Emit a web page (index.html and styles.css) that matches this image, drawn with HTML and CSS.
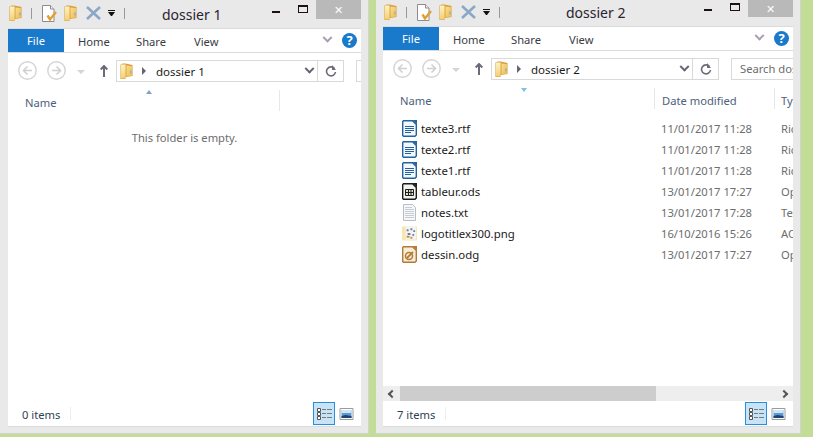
FILE: index.html

```html
<!DOCTYPE html>
<html>
  <head>
    <meta charset="utf-8">
    <title>dossier</title>
    <link rel="stylesheet" href="styles.css">
  </head>
  <body>
    <svg class="defs" width="0" height="0">
      <linearGradient id="fold-l" x1="0" y1="0" x2="0" y2="1">
        <stop offset="0" stop-color="#fdf3c4"/>
        <stop offset="1" stop-color="#f3cf73"/>
      </linearGradient>
      <linearGradient id="fold-r" x1="0" y1="0" x2="1" y2="1">
        <stop offset="0" stop-color="#fbe08e"/>
        <stop offset="1" stop-color="#eeb94f"/>
      </linearGradient>
      <symbol id="folder" viewBox="0 0 14 17">
        <path d="M.5 1.500L3 .5h3l7.500 1.500v12L6 15v2H.5z" fill="#d99f3e"/>
        <path d="M1 1.500h5v14l-.5 1H1z" fill="url(#fold-l)"/>
        <path d="M7 2.500l6 1v10l-6 .5z" fill="url(#fold-r)"/>
        <path d="M11 8h1.500v3H11z" fill="#7fb2d8"/>
      </symbol>
      <symbol id="newdoc" viewBox="0 0 15 17">
        <path d="M.5.500h8l3.500 3.500v12.500H.5z" fill="#fff" stroke="#8d8a94"/>
        <path d="M8.500.5v3.500h3.500" fill="#eee" stroke="#8d8a94"/>
        <path d="M5.500 10.500l2.500 4 6-7.500" fill="none" stroke="#e0a030" stroke-width="2.400"/>
      </symbol>
      <symbol id="cross" viewBox="0 0 15 14">
        <path d="M1 1l13 12M14 1L1 13" fill="none" stroke="#8ba7c7" stroke-width="2.600"/>
      </symbol>
      <symbol id="up" viewBox="0 0 8 12">
        <path d="M4 12V1M.7 4.500L4 1l3.300 3.500" fill="none" stroke="#6f6879" stroke-width="2"/>
      </symbol>
      <symbol id="refresh" viewBox="0 0 12 12">
        <path d="M9.500 3.500A4.500 4.500 0 1 0 10.500 7" fill="none" stroke="#706a78" stroke-width="1.600"/>
        <path d="M7 0v5h4z" fill="#706a78"/>
      </symbol>
      <symbol id="back" viewBox="0 0 19 19">
        <circle cx="9.500" cy="9.500" r="8.700" fill="#fff" stroke="#d4d4d4" stroke-width="1.400"/>
        <path d="M14 9.500H6M9.500 5.500l-4 4 4 4" fill="none" stroke="#d0d0d0" stroke-width="1.600"/>
      </symbol>
      <symbol id="doc" viewBox="0 0 15 17">
        <path d="M1.500.7h9l3.800 3.800v10.500l-1.300 1.300H1.500L.7 15.500V1.500z" fill="#f4f8fc" stroke="#22639f" stroke-width="1.400"/>
        <path d="M10.500 0H15v4.500z" fill="#22639f"/>
        <path d="M3 6.500h9M3 8.500h9M3 10.500h9M3 12.500h6" stroke="#22639f"/>
      </symbol>
      <symbol id="sheet" viewBox="0 0 15 17">
        <path d="M1.500.7h9l3.800 3.800v10.500l-1.300 1.300H1.500L.7 15.500V1.500z" fill="#f1f3ec" stroke="#1c1c1c" stroke-width="1.400"/>
        <path d="M10.500 0H15v4.500z" fill="#1c1c1c"/>
        <path d="M3.500 6.500h8v6h-8zM3.500 9.500h8M6.500 6.500v6M9 6.500v6" fill="#dfe3d4" stroke="#1c1c1c"/>
      </symbol>
      <symbol id="txt" viewBox="0 0 15 17">
        <path d="M1.500.5h9l3 3v13h-12z" fill="#f6f7f9" stroke="#b7bcc6"/>
        <path d="M3 3.500h7M3 5.500h9M3 7.500h9M3 9.500h9M3 11.500h9M3 13.500h9" stroke="#c8ccd4"/>
      </symbol>
      <symbol id="png" viewBox="0 0 16 17">
        <path d="M0 1h16v15H0z" fill="#f6e7b0"/>
        <path d="M4 1h11v14H4z" fill="#f4f4f4"/>
        <path d="M5 4h2v2H5zM9 3h2v2H9zM12 5h2v2h-2zM6 8h3v2H6zM11 9h2v2h-2z" fill="#6e7fa6"/>
        <path d="M5 11h3v2H5zM9 12h2v2H9z" fill="#c58b4c"/>
      </symbol>
      <symbol id="draw" viewBox="0 0 15 17">
        <path d="M1.500.7h9l3.800 3.800v10.500l-1.300 1.300H1.500L.7 15.500V1.500z" fill="#f8ecd9" stroke="#b27a35" stroke-width="1.400"/>
        <path d="M10.500 0H15v4.500z" fill="#b27a35"/>
        <circle cx="7" cy="10" r="3.500" fill="none" stroke="#b27a35" stroke-width="1.500"/>
        <path d="M5 12l6-6" stroke="#b27a35" stroke-width="1.800"/>
      </symbol>
      <symbol id="details" viewBox="0 0 15 12">
        <path d="M.5.500h3v3h-3zM.5 4.500h3v3h-3zM.5 8.500h3v3h-3z" fill="#fff" stroke="#555"/>
        <path d="M5 1.500h4M10 1.500h5M5 5.500h4M10 5.500h5M5 9.500h4M10 9.500h5" stroke="#7a7a7a"/>
      </symbol>
      <symbol id="thumbs" viewBox="0 0 14 12">
        <path d="M.5.500h13v11H.5z" fill="#fff" stroke="#9a9aa4"/>
        <path d="M2 2h10v8H2z" fill="#5b9bd5"/>
        <path d="M2 2h10v3H2z" fill="#cfe6f6"/>
        <path d="M2 8l4-1 6 1v2H2z" fill="#1d4470"/>
      </symbol>
    </svg>

    <div class="window first">
      <div class="titlebar">
        <div class="qat">
          <svg class="ico-folder"><use href="#folder"/></svg>
          <span class="qat-sep"></span>
          <svg class="ico-new"><use href="#newdoc"/></svg>
          <svg class="ico-folder"><use href="#folder"/></svg>
          <svg class="ico-cross"><use href="#cross"/></svg>
          <span class="qat-drop"></span>
          <span class="qat-sep"></span>
        </div>
        <div class="title">dossier 1</div>
        <div class="controls">
          <span class="min"></span>
          <span class="max"></span>
          <span class="close">✕</span>
        </div>
      </div>
      <div class="frame">
        <div class="tabs">
          <div class="tab-file">File</div>
          <div class="tab">Home</div>
          <div class="tab">Share</div>
          <div class="tab">View</div>
          <span class="chevron"></span>
          <span class="help">?</span>
        </div>
        <div class="nav">
          <svg class="ico-back"><use href="#back"/></svg>
          <svg class="ico-back flip"><use href="#back"/></svg>
          <span class="nav-drop"></span>
          <svg class="ico-up"><use href="#up"/></svg>
          <div class="address">
            <svg class="ico-folder"><use href="#folder"/></svg>
            <span class="crumb-arrow"></span>
            <span class="crumb">dossier 1</span>
            <span class="chevron small"></span>
            <span class="refresh"><svg class="ico-refresh"><use href="#refresh"/></svg></span>
          </div>
          <div class="search"></div>
        </div>
        <div class="content">
          <div class="head">
            <div class="col-name">Name<span class="sort up-caret"></span></div>
          </div>
          <div class="empty">This folder is empty.</div>
        </div>
        <div class="status">
          <span class="count">0 items</span>
          <span class="view-btn on"><svg class="ico-view"><use href="#details"/></svg></span>
          <span class="view-btn"><svg class="ico-view"><use href="#thumbs"/></svg></span>
        </div>
      </div>
    </div>

    <div class="window second">
      <div class="titlebar">
        <div class="qat">
          <svg class="ico-folder"><use href="#folder"/></svg>
          <span class="qat-sep"></span>
          <svg class="ico-new"><use href="#newdoc"/></svg>
          <svg class="ico-folder"><use href="#folder"/></svg>
          <svg class="ico-cross"><use href="#cross"/></svg>
          <span class="qat-drop"></span>
          <span class="qat-sep"></span>
        </div>
        <div class="title">dossier 2</div>
        <div class="controls">
          <span class="min"></span>
          <span class="max"></span>
          <span class="close">✕</span>
        </div>
      </div>
      <div class="frame">
        <div class="tabs">
          <div class="tab-file">File</div>
          <div class="tab">Home</div>
          <div class="tab">Share</div>
          <div class="tab">View</div>
          <span class="chevron"></span>
          <span class="help">?</span>
        </div>
        <div class="nav">
          <svg class="ico-back"><use href="#back"/></svg>
          <svg class="ico-back flip"><use href="#back"/></svg>
          <span class="nav-drop"></span>
          <svg class="ico-up"><use href="#up"/></svg>
          <div class="address">
            <svg class="ico-folder"><use href="#folder"/></svg>
            <span class="crumb-arrow"></span>
            <span class="crumb">dossier 2</span>
            <span class="chevron small"></span>
            <span class="refresh"><svg class="ico-refresh"><use href="#refresh"/></svg></span>
          </div>
          <div class="search">Search dossier 2</div>
        </div>
        <div class="content">
          <div class="head">
            <div class="col-name">Name<span class="sort down-caret"></span></div>
            <div class="col-date">Date modified</div>
            <div class="col-type">Type</div>
          </div>
          <div class="list">
            <div class="row"><svg class="ico-file"><use href="#doc"/></svg><span class="fname">texte3.rtf</span><span class="fdate">11/01/2017 11:28</span><span class="ftype">Rich Text</span></div>
            <div class="row"><svg class="ico-file"><use href="#doc"/></svg><span class="fname">texte2.rtf</span><span class="fdate">11/01/2017 11:28</span><span class="ftype">Rich Text</span></div>
            <div class="row"><svg class="ico-file"><use href="#doc"/></svg><span class="fname">texte1.rtf</span><span class="fdate">11/01/2017 11:28</span><span class="ftype">Rich Text</span></div>
            <div class="row"><svg class="ico-file"><use href="#sheet"/></svg><span class="fname">tableur.ods</span><span class="fdate">13/01/2017 17:27</span><span class="ftype">OpenDoc</span></div>
            <div class="row"><svg class="ico-file"><use href="#txt"/></svg><span class="fname">notes.txt</span><span class="fdate">13/01/2017 17:28</span><span class="ftype">Text Doc</span></div>
            <div class="row"><svg class="ico-file"><use href="#png"/></svg><span class="fname">logotitlex300.png</span><span class="fdate">16/10/2016 15:26</span><span class="ftype">ACDSee</span></div>
            <div class="row"><svg class="ico-file"><use href="#draw"/></svg><span class="fname">dessin.odg</span><span class="fdate">13/01/2017 17:27</span><span class="ftype">OpenDoc</span></div>
          </div>
        </div>
        <div class="hscroll">
          <span class="arrow left"></span>
          <span class="thumb"></span>
          <span class="arrow right"></span>
        </div>
        <div class="status">
          <span class="count">7 items</span>
          <span class="view-btn on"><svg class="ico-view"><use href="#details"/></svg></span>
          <span class="view-btn"><svg class="ico-view"><use href="#thumbs"/></svg></span>
        </div>
      </div>
    </div>
  </body>
</html>
```

FILE: styles.css

```css
* {
  margin: 0;
  padding: 0;
  box-sizing: border-box;
}
html, body {
  height: 100%;
}
body {
  display: flex;
  gap: 7px;
  background: #c3dd97;
  font-family: "Noto Sans", sans-serif;
  font-size: 11.2px;
  overflow: hidden;
}
.defs {
  position: absolute;
}

.window {
  height: 434px;
  padding: 0 7px 6px 8px;
  display: flex;
  flex-direction: column;
  background: #e9e9e9;
  border-right: 1px solid #d2d2d2;
  border-bottom: 1px solid #d2d2d2;
}
.first {
  width: 369px;
}
.second {
  width: 425px;
  padding-left: 7px;
}

/* title bar */
.titlebar {
  display: flex;
  flex: none;
  height: 28px;
}
.second .titlebar {
  height: 26px;
}
.qat {
  display: flex;
  align-items: center;
  padding-left: 1px;
  height: 26px;
}
.second .qat {
  height: 24px;
}
.ico-folder {
  width: 13px;
  height: 16px;
  flex: none;
}
.qat-sep {
  width: 1px;
  height: 11px;
  margin: 0 10px 0 9px;
  background: #9a96a0;
}
.ico-new {
  width: 15px;
  height: 17px;
  margin-right: 7px;
}
.ico-cross {
  width: 15px;
  height: 14px;
  margin-left: 9px;
}
.qat-drop {
  width: 7px;
  height: 6px;
  margin-left: 7px;
  border-top: 1px solid #111;
}
.qat-drop::after {
  content: "";
  display: block;
  margin: 1px 0 0;
  border: 3.500px solid transparent;
  border-top: 4px solid #111;
  border-bottom: 0;
}
.title {
  margin-left: 27px;
  font-size: 14px;
  line-height: 29px;
  color: #2b2430;
}
.second .title {
  margin-left: 56px;
  line-height: 25px;
}
.controls {
  margin-left: auto;
  display: flex;
}
.min {
  width: 8px;
  height: 2px;
  margin-top: 11px;
  background: #1e1018;
}
.second .min {
  margin-top: 9px;
}
.max {
  width: 10px;
  height: 8px;
  margin: 5px 8px 0 18px;
  border: 1px solid #1e1018;
  border-top-width: 2px;
}
.second .max {
  margin-top: 3px;
}
.close {
  width: 45px;
  height: 19px;
  background: #b9b9b9;
  color: #fff;
  font-size: 11px;
  line-height: 19px;
  text-align: center;
}
.second .close {
  height: 17px;
  line-height: 17px;
}

/* frame and ribbon */
.frame {
  flex: 1;
  min-height: 0;
  display: flex;
  flex-direction: column;
  background: #fff;
  border: 1px solid #dadbdc;
  border-left: 0;
  border-right: 0;
}
.tabs {
  flex: none;
  display: flex;
  align-items: center;
  height: 24px;
  border-bottom: 1px solid #dadbdc;
  color: #3b3b44;
}
.tab-file {
  width: 56px;
  height: 23px;
  margin-right: 14px;
  background: #1979ca;
  color: #fff;
  line-height: 23px;
  text-align: center;
}
.tab {
  width: 58px;
  padding-top: 2px;
}
.chevron {
  width: 7px;
  height: 7px;
  margin-left: auto;
  margin-right: 11px;
  border-right: 2px solid #a89eb0;
  border-bottom: 2px solid #a89eb0;
  transform: rotate(45deg) translate(-2px, -2px);
}
.help {
  width: 15px;
  height: 15px;
  margin-right: 4px;
  border-radius: 50%;
  background: #1979ca;
  color: #fff;
  font-size: 13px;
  font-weight: 700;
  line-height: 15px;
  text-align: center;
}

/* navigation */
.nav {
  flex: none;
  display: flex;
  align-items: flex-start;
  height: 37px;
  padding: 7px 0 0 10px;
  overflow: hidden;
}
.ico-back {
  width: 19px;
  height: 19px;
  margin: 1px 10px 0 0;
  flex: none;
}
.flip {
  transform: scaleX(-1);
}
.nav-drop {
  width: 0;
  height: 0;
  margin: 10px 15px 0 1px;
  border: 4px solid transparent;
  border-top: 4px solid #d4d4d4;
  border-bottom: 0;
  flex: none;
}
.ico-up {
  width: 8px;
  height: 12px;
  margin: 5px 8px 0 0;
  flex: none;
}
.address {
  display: flex;
  align-items: center;
  flex: none;
  width: 228px;
  height: 22px;
  padding-left: 3px;
  border: 1px solid #d9d9d9;
  color: #1a1a1a;
  font-size: 11.5px;
}
.crumb-arrow {
  width: 0;
  height: 0;
  margin: 0 10px 0 9px;
  border: 4px solid transparent;
  border-left: 4px solid #6a6274;
  border-right: 0;
}
.crumb {
  flex: 1;
}
.address .small {
  margin: 0 4px 0 0;
  width: 7px;
  height: 7px;
  border-color: #6a6274;
}
.refresh {
  width: 26px;
  height: 20px;
  display: flex;
  align-items: center;
  justify-content: center;
  border-left: 1px solid #d9d9d9;
}
.ico-refresh {
  width: 12px;
  height: 12px;
}
.search {
  flex: none;
  width: 70px;
  height: 22px;
  margin-left: 12px;
  padding-left: 8px;
  border: 1px solid #d9d9d9;
  color: #6d6d6d;
  line-height: 20px;
  white-space: nowrap;
  overflow: hidden;
}

/* file list */
.content {
  flex: 1;
  min-height: 0;
  overflow: hidden;
}
.head {
  display: flex;
  height: 21px;
  line-height: 26px;
  color: #4c607a;
  white-space: nowrap;
}
.col-name {
  position: relative;
  flex: none;
  width: 272px;
  padding-left: 17px;
  border-right: 1px solid #e3e8ee;
}
.col-date {
  flex: none;
  width: 120px;
  padding-left: 7px;
  border-right: 1px solid #e3e8ee;
}
.col-type {
  flex: none;
  padding-left: 6px;
}
.sort {
  position: absolute;
  left: 138px;
  top: 0;
  width: 0;
  height: 0;
  border: 3.500px solid transparent;
  border-top: 0;
}
.up-caret {
  border-bottom: 4px solid #7fa4c7;
}
.down-caret {
  border: 3.500px solid transparent;
  border-bottom: 0;
  border-top: 4px solid #7fc0e4;
}
.empty {
  margin-top: 19px;
  text-align: center;
  color: #6d6d6d;
}
.list {
  padding-top: 9px;
}
.row {
  display: flex;
  align-items: center;
  height: 21px;
  padding-left: 19px;
  white-space: nowrap;
}
.ico-file {
  width: 15px;
  height: 17px;
  flex: none;
}
.fname {
  flex: none;
  width: 240px;
  margin-left: 4px;
  color: #1a1a1a;
  font-size: 11.4px;
}
.fdate {
  flex: none;
  width: 120px;
  color: #6d6d6d;
}
.ftype {
  flex: none;
  color: #6d6d6d;
}

/* bottom bars */
.hscroll {
  flex: none;
  display: flex;
  align-items: center;
  height: 15px;
  background: #eeeeee;
}
.thumb {
  width: 256px;
  height: 15px;
  margin-left: 5px;
  background: #cdcdcd;
}
.arrow {
  width: 6px;
  height: 6px;
  flex: none;
  border-left: 2px solid #555;
  border-bottom: 2px solid #555;
  margin-left: 6px;
  transform: rotate(45deg);
}
.arrow.right {
  margin-left: auto;
  margin-right: 6px;
  transform: rotate(225deg);
}
.status {
  flex: none;
  display: flex;
  align-items: center;
  height: 25px;
  padding-right: 4px;
}
.count {
  width: 63px;
  height: 13px;
  margin-right: auto;
  padding-left: 14px;
  border-right: 1px solid #eeeeee;
  color: #2e3f55;
  line-height: 15px;
}
.view-btn {
  width: 22px;
  height: 23px;
  display: flex;
  align-items: center;
  justify-content: center;
  border: 1px solid transparent;
}
.view-btn.on {
  background: #c6e3f7;
  border-color: #2a8fdb;
}
.ico-view {
  width: 15px;
  height: 12px;
}
```
